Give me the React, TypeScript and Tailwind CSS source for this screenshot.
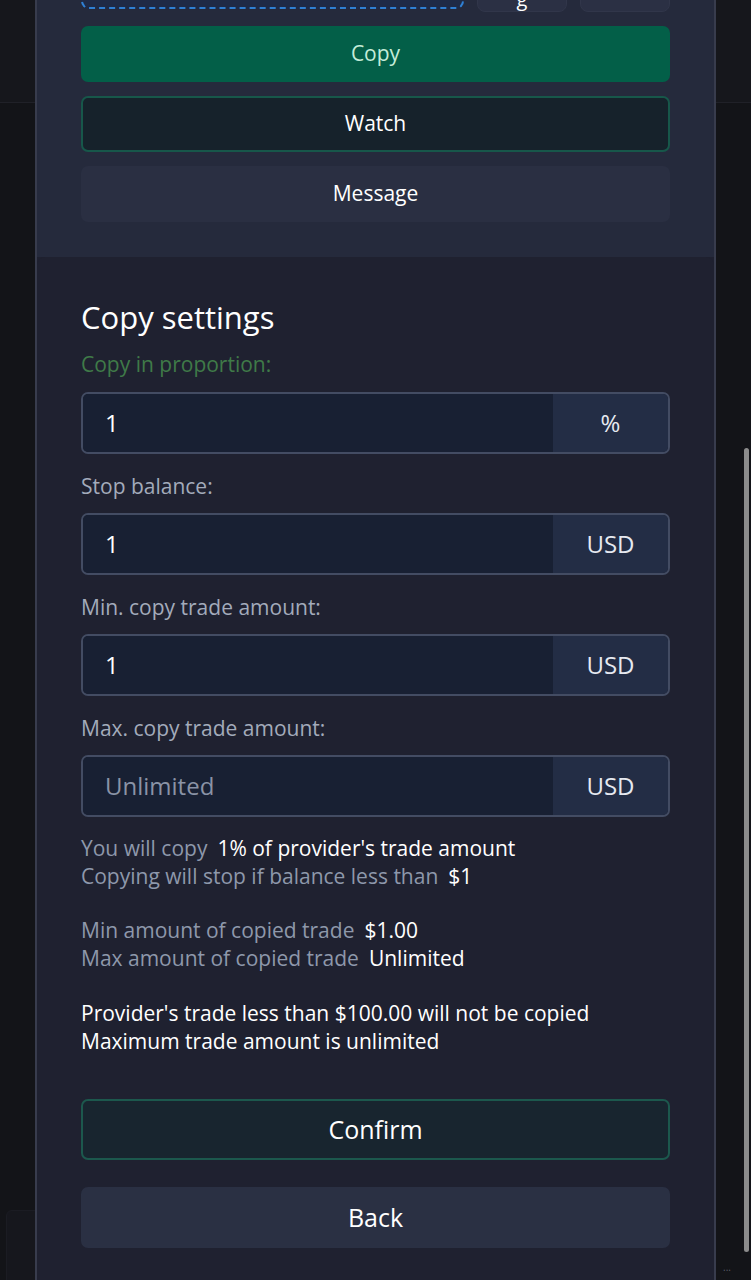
import React from "react"

const font = { fontFamily: '"Open Sans", "Noto Sans", sans-serif' }

function Field({ value, suffix, placeholder }: { value?: string; suffix: string; placeholder?: string }) {
  return (
    <div className="flex h-[62px] rounded-[7px] border-2 border-[#434c63] overflow-hidden">
      <div className="flex-1 bg-[#182033] flex items-center pl-[22px] text-[24px]">
        {value ? (
          <span className="text-white">{value}</span>
        ) : (
          <span className="text-[#8a93a6]">{placeholder}</span>
        )}
      </div>
      <div className="w-[115px] bg-[#232d45] flex items-center justify-center text-[24px] text-[#e6e9f0]">{suffix}</div>
    </div>
  )
}

export default function App() {
  return (
    <div className="relative w-full h-[1280px] overflow-hidden bg-[#131418]" style={font}>
      {/* page behind the modal */}
      <div className="absolute top-0 left-0 right-0 h-[103px] bg-[#16171c] border-b border-[#202128]" />
      <div className="absolute left-[6px] top-[1210px] w-[60px] h-[80px] rounded-[6px] bg-[#16171d] border border-[#1b1c23]" />
      <div className="absolute right-[20px] top-[1260px] text-[10px] text-[#5a5d68]">...</div>

      <div className="relative mx-auto w-[681px] h-[1400px] border-x-2 border-[#383c4d] bg-[#1f2130]">
        {/* top section */}
        <div className="bg-[#252a3c] px-[44px] pb-[35px]">
          <div className="flex gap-[13px] h-[52px] -mt-[40px]">
            <div className="flex-1 rounded-[8px] border-2 border-dashed border-[#2f80d4] bg-[#1f2a46] mb-[3px]" />
            <div className="w-[90px] rounded-[8px] bg-[#2b3044] border border-[#31364a] flex items-end justify-center text-white text-[20px] leading-none overflow-hidden">
              <span className="mb-[2px]">g</span>
            </div>
            <div className="w-[90px] rounded-[8px] bg-[#2b3044] border border-[#31364a]" />
          </div>
          <div className="flex flex-col gap-[14px] mt-[14px]">
            <button className="h-[56px] rounded-[7px] bg-[#035f48] text-[#c4ecd8] text-[21px]">Copy</button>
            <button className="h-[56px] rounded-[7px] bg-[#16222b] border-2 border-[#17574a] text-white text-[21px]">Watch</button>
            <button className="h-[56px] rounded-[7px] bg-[#2a2f42] text-white text-[21px]">Message</button>
          </div>
        </div>

        {/* copy settings */}
        <div className="px-[44px] pt-[38px] bg-[#1f2130] rounded-t-[8px]">
          <h2 className="text-white text-[31px] leading-[44px]">Copy settings</h2>
          <div className="mt-[11px] text-[#3f7a48] text-[21px] leading-[28px]">Copy in proportion:</div>
          <div className="mt-[14px]">
            <Field value="1" suffix="%" />
          </div>
          <div className="mt-[18px] text-[#a3abbb] text-[21px] leading-[28px]">Stop balance:</div>
          <div className="mt-[13px]">
            <Field value="1" suffix="USD" />
          </div>
          <div className="mt-[18px] text-[#a3abbb] text-[21px] leading-[28px]">Min. copy trade amount:</div>
          <div className="mt-[13px]">
            <Field value="1" suffix="USD" />
          </div>
          <div className="mt-[18px] text-[#a3abbb] text-[21px] leading-[28px]">Max. copy trade amount:</div>
          <div className="mt-[13px]">
            <Field placeholder="Unlimited" suffix="USD" />
          </div>

          <div className="mt-[17px] text-[21px] leading-[28px]">
            <div>
              <span className="text-[#8e98ab]">You will copy</span>
              <span className="text-white ml-[10px]">1% of provider's trade amount</span>
            </div>
            <div>
              <span className="text-[#8e98ab]">Copying will stop if balance less than</span>
              <span className="text-white ml-[10px]">$1</span>
            </div>
            <div className="mt-[26px]">
              <span className="text-[#8e98ab]">Min amount of copied trade</span>
              <span className="text-white ml-[10px]">$1.00</span>
            </div>
            <div>
              <span className="text-[#8e98ab]">Max amount of copied trade</span>
              <span className="text-white ml-[10px]">Unlimited</span>
            </div>
            <div className="mt-[27px] text-white">Provider's trade less than $100.00 will not be copied</div>
            <div className="text-white">Maximum trade amount is unlimited</div>
          </div>

          <button className="mt-[44px] w-full h-[61px] rounded-[7px] bg-[#18252f] border-2 border-[#1c584d] text-white text-[25px]">
            Confirm
          </button>
          <button className="mt-[27px] w-full h-[61px] rounded-[7px] bg-[#2a3043] text-white text-[25px]">Back</button>
        </div>
      </div>

      {/* scrollbar */}
      <div className="absolute right-[2px] top-[448px] w-[5px] h-[804px] rounded-full bg-[#8c8c8c]" />
    </div>
  )
}
